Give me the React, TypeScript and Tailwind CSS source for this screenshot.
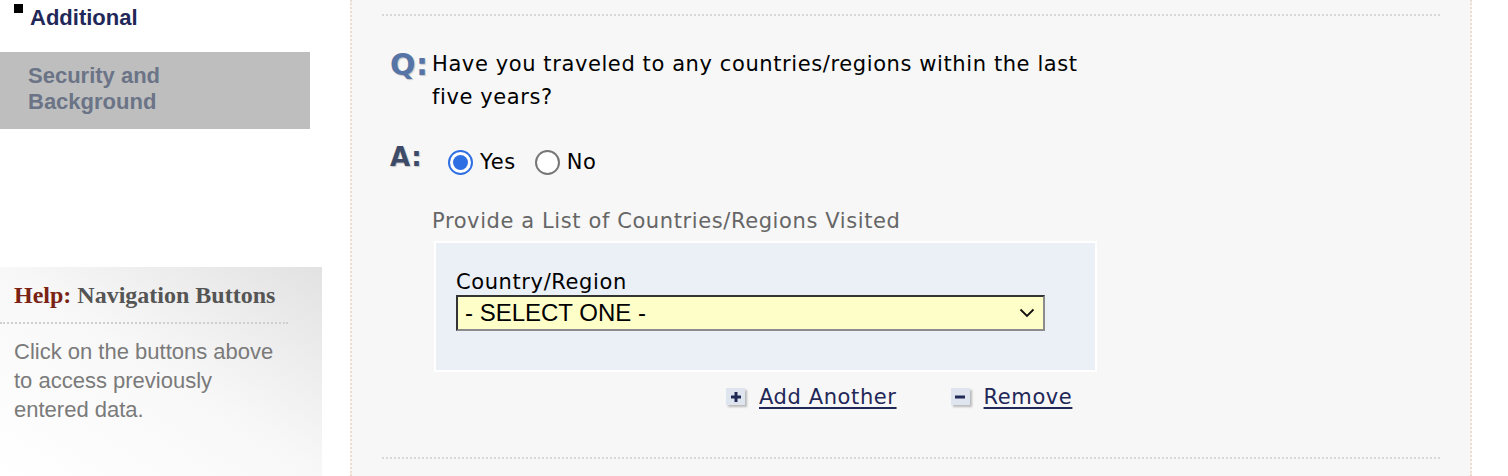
import React from "react";

const verdana = "font-['DejaVu_Sans',Verdana,sans-serif] tracking-[0.6px]";
const arial = "font-['Liberation_Sans',Arial,sans-serif]";

function Radio({ checked }: { checked?: boolean }) {
  if (checked) {
    return (
      <span className="flex h-[25px] w-[25px] items-center justify-center rounded-full border-2 border-[#2f6fe4] bg-white">
        <span className="h-[15px] w-[15px] rounded-full bg-[#2f6fe4]" />
      </span>
    );
  }
  return <span className="block h-[25px] w-[25px] rounded-full border-2 border-[#767676] bg-white" />;
}

function LinkIcon({ kind }: { kind: "plus" | "minus" }) {
  return (
    <span className="flex h-[17px] w-[19px] items-center justify-center bg-[#dfe5ee] shadow-[2px_2px_2px_rgba(0,0,0,0.25)]">
      <svg width="12" height="12" viewBox="0 0 12 12">
        <rect x="1" y="4.5" width="10" height="3" fill="#1f2a55" />
        {kind === "plus" && <rect x="4.5" y="1" width="3" height="10" fill="#1f2a55" />}
      </svg>
    </span>
  );
}

export default function App() {
  return (
    <div className="flex h-[476px] w-[1508px] overflow-hidden bg-white">
      {/* Left nav */}
      <aside className="flex w-[350px] shrink-0 flex-col">
        <div className={`flex items-start pl-[14px] pt-[4px] ${arial}`}>
          <span className="mt-0 h-[9px] w-[9px] bg-black" />
          <span className="ml-[7px] text-[22px] font-bold leading-[28px] text-[#1f2858]">Additional</span>
        </div>
        <div className={`mt-[20px] w-[310px] bg-[#bebebe] pb-[14px] pl-[28px] pt-[11px] text-[22px] font-bold leading-[26px] text-[#6b7487] ${arial}`}>
          Security and
          <br />
          Background
        </div>
        <div className="mt-[138px] h-[210px] w-[322px] bg-linear-to-bl from-[#e2e2e2] via-[#f8f8f8] to-white">
          <div className="px-[14px] pt-[14px] font-['Liberation_Serif','Times_New_Roman',serif] text-[24px] font-bold leading-[28px]">
            <span className="text-[#7a2314]">Help:</span> <span className="text-[#555]">Navigation Buttons</span>
          </div>
          <div className="mt-[13px] w-[288px] border-t-2 border-dotted border-[#cfcfcf]" />
          <p className={`px-[14px] pt-[13px] text-[22px] leading-[29px] text-[#7a7a7a] ${arial}`}>
            Click on the buttons above
            <br />
            to access previously
            <br />
            entered data.
          </p>
        </div>
      </aside>

      {/* Main form panel */}
      <main className="h-full w-[1122px] shrink-0 border-x-2 border-dotted border-[#ecdcd2] bg-[#f7f7f7] px-[30px]">
        <div className="mt-[14px] border-t-2 border-dotted border-[#d8d8d8]" />

        <div className="mt-[32px] flex">
          <span className={`w-[50px] pl-[8px] pt-[2px] text-[30px] font-bold leading-[30px] text-[#5774a6] ${verdana} [text-shadow:1px_1px_1px_rgba(0,0,0,0.2)]`}>
            Q:
          </span>
          <p className={`w-[660px] text-[21px] leading-[33px] text-black ${verdana}`}>
            Have you traveled to any countries/regions within the last five years?
          </p>
        </div>

        <div className="mt-[30px] flex items-start">
          <span className={`w-[66px] pl-[8px] text-[26px] font-bold leading-[26px] text-[#3d4a68] ${verdana} [text-shadow:1px_1px_1px_rgba(0,0,0,0.2)]`}>
            A:
          </span>
          <div className={`mt-[3px] flex items-center text-[21px] text-black ${verdana}`}>
            <Radio checked />
            <span className="ml-[7px]">Yes</span>
            <span className="ml-[19px]">
              <Radio />
            </span>
            <span className="ml-[7px]">No</span>
          </div>
        </div>

        <div className="pl-[50px]">
          <p className={`mt-[28px] text-[21px] leading-[28px] text-[#666] ${verdana}`}>
            Provide a List of Countries/Regions Visited
          </p>
          <div className="ml-[2px] mt-[6px] h-[131px] w-[663px] border-2 border-white bg-[#ebeff6] px-[20px] pt-[26px]">
            <div className={`text-[21px] leading-[26px] text-black ${verdana}`}>Country/Region</div>
            <div className="flex h-[36px] w-[589px] items-center justify-between border-2 border-b-[#8c8c8c] border-l-[#333] border-r-[#8c8c8c] border-t-[#333] bg-[#fefec8] pl-[7px] pr-[8px]">
              <span className={`text-[24px] leading-none text-black ${arial}`}>- SELECT ONE -</span>
              <svg width="16" height="10" viewBox="0 0 16 10">
                <path d="M1.5 1.5 L8 8 L14.5 1.5" fill="none" stroke="#111" strokeWidth="1.8" />
              </svg>
            </div>
          </div>
          <div className={`mt-[11px] flex items-center pl-[294px] text-[21px] leading-[28px] text-[#1f2858] ${verdana}`}>
            <LinkIcon kind="plus" />
            <a className="ml-[14px] underline underline-offset-[3px]" href="#">
              Add Another
            </a>
            <span className="ml-[54px]">
              <LinkIcon kind="minus" />
            </span>
            <a className="ml-[14px] underline underline-offset-[3px]" href="#">
              Remove
            </a>
          </div>
        </div>

        <div className="mt-[46px] border-t-2 border-dotted border-[#d8d8d8]" />
      </main>
      <div className="flex-1 bg-white" />
    </div>
  );
}
